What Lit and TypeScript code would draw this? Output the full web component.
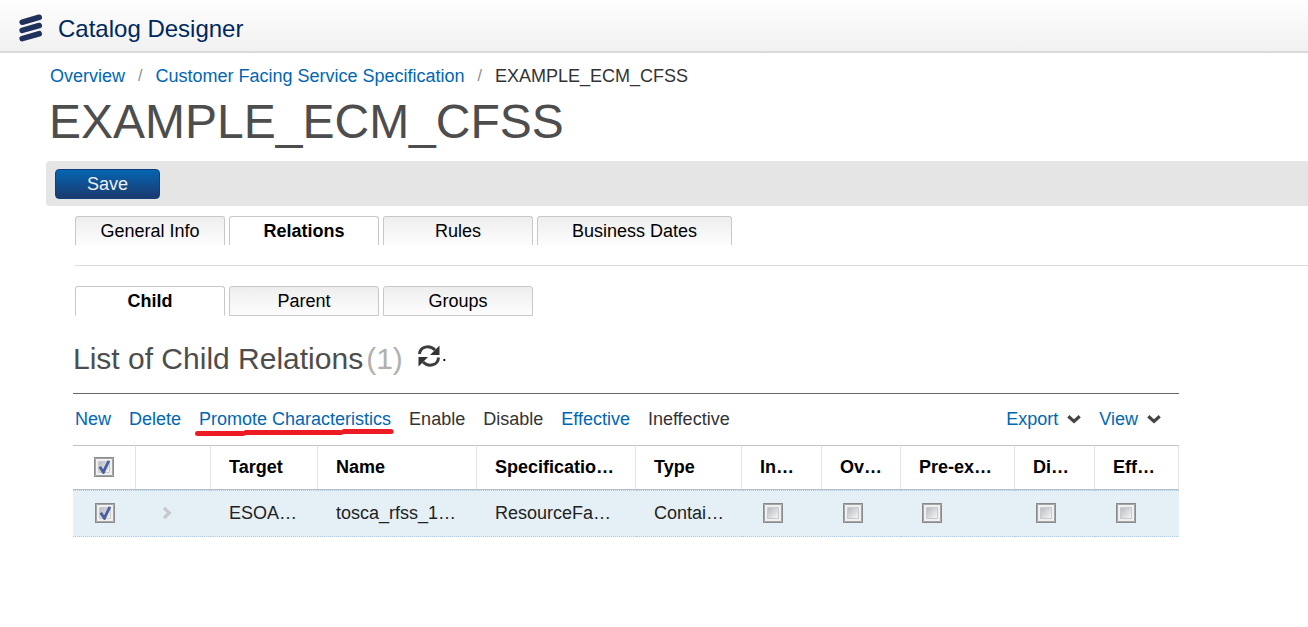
import { LitElement, html, css, svg } from "lit";
import { customElement, property, state } from "lit/decorators.js";
import { classMap } from "lit/directives/class-map.js";

const chevronDown = svg`<path d="M1.300 2.200 L7 7.400 L12.700 2.200" fill="none" stroke="#444" stroke-width="3.200"/>`;

@customElement("tab-strip")
class TabStrip extends LitElement {
  @property({ attribute: false }) tabs: string[] = [];
  @property() active = "";
  @property({ type: Boolean }) closed = false;

  static styles = css`
    :host {
      display: block;
    }
    .tabs {
      display: flex;
      flex-wrap: wrap;
      gap: 4px;
    }
    .tab {
      box-sizing: border-box;
      min-width: 150px;
      height: 29px;
      margin: 0;
      padding: 0 34px;
      border: 1px solid #c8c8c8;
      border-bottom-width: 0;
      border-radius: 3px 3px 0 0;
      background: linear-gradient(#eeeeee, #fdfdfd);
      color: #000;
      font: 18px/26px "Liberation Sans", Arial, sans-serif;
      cursor: pointer;
    }
    .tab.slim {
      padding: 0 8px;
    }
    .closed .tab {
      height: 30px;
      border-bottom: 1px solid #c8c8c8;
    }
    .tabs .tab.active {
      border-bottom-color: #fff;
      background: #fff;
      font-weight: bold;
    }
  `;

  render() {
    return html`<div class=${classMap({ tabs: true, closed: this.closed })} role="tablist">
      ${this.tabs.map(
        (t) => html`<button
          role="tab"
          aria-selected=${t === this.active ? "true" : "false"}
          class=${classMap({ tab: true, active: t === this.active, slim: t.length < 13 })}
          @click=${() => (this.active = t)}
        >${t}</button>`
      )}
    </div>`;
  }
}

interface Column {
  title: string;
  width: number;
  value?: string;
}

const COLUMNS: Column[] = [
  { title: "Target", width: 107, value: "ESOA…" },
  { title: "Name", width: 159, value: "tosca_rfss_1…" },
  { title: "Specificatio…", width: 159, value: "ResourceFa…" },
  { title: "Type", width: 106, value: "Contai…" },
  { title: "In…", width: 80 },
  { title: "Ov…", width: 79 },
  { title: "Pre-ex…", width: 114 },
  { title: "Di…", width: 80 },
  { title: "Eff…", width: 84 },
];

@customElement("relations-table")
class RelationsTable extends LitElement {
  @state() private selected = true;

  static styles = css`
    :host {
      display: block;
    }
    table {
      width: 100%;
      table-layout: fixed;
      border-collapse: separate;
      border-spacing: 0;
      font: 18px/24px "Liberation Sans", Arial, sans-serif;
      color: #222;
    }
    th,
    td {
      box-sizing: border-box;
      padding: 0 0 2px 18px;
      text-align: left;
      white-space: nowrap;
      overflow: hidden;
    }
    th {
      height: 45px;
      border-top: 1px solid #c4c4c4;
      border-bottom: 1px solid #b4bcc6;
      border-right: 1px solid #e2e2e2;
      color: #000;
    }
    td {
      height: 47px;
      border-top: 1px dotted #b0cce8;
      border-bottom: 1px dotted #b0cce8;
      background: #e5f0f6;
    }
    .pick {
      padding: 0 0 2px;
      text-align: center;
    }
    .flag {
      padding-left: 21px;
    }
    .expand {
      display: block;
      margin: 0 0 0 24px;
      padding: 0;
      border: 0;
      background: none;
      line-height: 0;
      cursor: pointer;
    }
    input {
      appearance: none;
      box-sizing: border-box;
      display: inline-block;
      vertical-align: middle;
      width: 20px;
      height: 20px;
      margin: 0 0 2px;
      border: 1px solid #8a8c8c;
      background: url("data:image/svg+xml,%3Csvg xmlns='http://www.w3.org/2000/svg' viewBox='0 0 18 18'%3E%3ClinearGradient id='g' x2='1' y2='1'%3E%3Cstop stop-color='%23b4b9c0'/%3E%3Cstop offset='1' stop-color='%23f8f8f8'/%3E%3C/linearGradient%3E%3Cpath fill='%23f0f0f0' stroke='%23a4a6a6' d='M.5.5h17v17H.5z'/%3E%3Cpath fill='url(%23g)' stroke='%23c8cacc' d='M3.500 3.500h11v11h-11z'/%3E%3C/svg%3E");
    }
    input:checked {
      background: url("data:image/svg+xml,%3Csvg xmlns='http://www.w3.org/2000/svg' viewBox='0 0 18 18'%3E%3ClinearGradient id='g' x2='1' y2='1'%3E%3Cstop stop-color='%23b4b9c0'/%3E%3Cstop offset='1' stop-color='%23f8f8f8'/%3E%3C/linearGradient%3E%3Cpath fill='%23f0f0f0' stroke='%23a4a6a6' d='M.5.5h17v17H.5z'/%3E%3Cpath fill='url(%23g)' stroke='%23c8cacc' d='M3.500 3.500h11v11h-11z'/%3E%3Cpath fill='%234a5f9f' d='M3.500 9.500l2.600-1.500 2 3.200 4.400-8.700 2.700.6-6 13H7.800z'/%3E%3C/svg%3E");
    }
  `;

  private toggle() {
    this.selected = !this.selected;
  }

  render() {
    return html`<table>
      <colgroup>
        <col width="63" />
        <col width="75" />
        ${COLUMNS.map((c) => html`<col width=${c.width} />`)}
      </colgroup>
      <thead>
        <tr>
          <th class="pick">
            <input type="checkbox" aria-label="Select all" .checked=${this.selected} @change=${this.toggle} />
          </th>
          <th></th>
          ${COLUMNS.map((c) => html`<th scope="col">${c.title}</th>`)}
        </tr>
      </thead>
      <tbody>
        <tr>
          <td class="pick">
            <input type="checkbox" aria-label="Select row" .checked=${this.selected} @change=${this.toggle} />
          </td>
          <td class="pick">
            <button class="expand" aria-label="Expand row">
              <svg width="12" height="14" viewBox="0 0 12 14">
                <path d="M4 1.800 L9.300 7 L4 12.200" fill="none" stroke="#c6c8c9" stroke-width="3.200" />
              </svg>
            </button>
          </td>
          ${COLUMNS.map((c) =>
            c.value
              ? html`<td>${c.value}</td>`
              : html`<td class="flag"><input type="checkbox" aria-label=${c.title} /></td>`
          )}
        </tr>
      </tbody>
    </table>`;
  }
}

@customElement("app-root")
class AppRoot extends LitElement {
  static styles = css`
    :host {
      display: block;
      min-height: 100vh;
      background: #fff;
      color: #333;
      font: 18px/24px "Liberation Sans", Arial, sans-serif;
    }
    .topbar {
      display: flex;
      align-items: center;
      gap: 14px;
      box-sizing: border-box;
      height: 53px;
      padding: 6px 18px 0;
      border-bottom: 2px solid #dadada;
      background: linear-gradient(#fefefe, #f1f1f1);
    }
    .product {
      color: #00285f;
      font-size: 24px;
      line-height: 28px;
    }
    .logo {
      display: block;
    }
    a {
      color: #0066b3;
      text-decoration: none;
    }
    .crumbs {
      display: flex;
      align-items: center;
      gap: 13px;
      padding: 11px 50px 0;
    }
    .slash {
      color: #8c8c8c;
      font-size: 16px;
    }
    h1 {
      margin: 10px 0 0;
      padding: 0 49px;
      color: #4d4d4d;
      font-size: 48px;
      font-weight: normal;
      line-height: 48px;
    }
    .actions {
      margin: 15px 0 0 46px;
      padding: 8px 9px 7px;
      border-radius: 4px 0 0 4px;
      background: #e5e5e5;
    }
    .save {
      display: block;
      width: 105px;
      height: 30px;
      padding: 0;
      border: 1px solid #123f77;
      border-radius: 4px;
      background: linear-gradient(#0465b1, #1b3a70);
      color: #f0f0f0;
      font: inherit;
      cursor: pointer;
    }
    .main {
      padding: 10px 0 0 75px;
    }
    .divider {
      margin: 20px 0;
      border: 0;
      border-top: 1px solid #dcdcdc;
    }
    .list {
      margin: 0 129px 0 73px;
      padding-top: 25px;
    }
    .heading {
      display: flex;
      align-items: center;
      height: 36px;
    }
    h2 {
      margin: 0;
      color: #4d4d4d;
      font-size: 30px;
      font-weight: normal;
      line-height: 36px;
    }
    .count {
      margin-left: 3px;
      color: #b0b0b0;
    }
    .refresh {
      margin: 0 1px 6px 14px;
      padding: 0;
      border: 0;
      background: none;
      line-height: 0;
      cursor: pointer;
    }
    .dot {
      padding-bottom: 8px;
      color: #000;
      font-size: 18px;
    }
    .toolbar {
      box-sizing: border-box;
      display: flex;
      justify-content: space-between;
      align-items: center;
      margin-top: 16px;
      height: 52px;
      padding: 0 18px 2px 2px;
      border-top: 1px solid #666;
    }
    .group {
      display: flex;
      gap: 18px;
    }
    .command {
      display: flex;
      align-items: center;
      gap: 9px;
      position: relative;
      margin: 0;
      padding: 0;
      border: 0;
      background: none;
      color: #0066b3;
      font: inherit;
      white-space: nowrap;
      cursor: pointer;
    }
    .plain {
      color: #333;
    }
    .marker {
      position: absolute;
      left: -4px;
      top: 21px;
    }
  `;

  render() {
    return html`
      <header class="topbar">
        <svg class="logo" width="26" height="29" viewBox="0 0 26 29" aria-hidden="true">
          <g stroke="#20315c" stroke-width="5.600" stroke-linecap="round">
            <path d="M4.200 8.200 L21.200 3.300" />
            <path d="M4.200 16.400 L21.200 11.500" />
            <path d="M4.200 24.600 L21.200 19.700" />
          </g>
        </svg>
        <span class="product">Catalog Designer</span>
      </header>
      <nav class="crumbs" aria-label="Breadcrumb">
        <a href="#overview">Overview</a>
        <span class="slash">/</span>
        <a href="#cfss">Customer Facing Service Specification</a>
        <span class="slash">/</span>
        <span>EXAMPLE_ECM_CFSS</span>
      </nav>
      <h1>EXAMPLE_ECM_CFSS</h1>
      <div class="actions"><button class="save">Save</button></div>
      <div class="main">
        <tab-strip .tabs=${["General Info", "Relations", "Rules", "Business Dates"]} active="Relations"></tab-strip>
        <hr class="divider" />
        <tab-strip closed .tabs=${["Child", "Parent", "Groups"]} active="Child"></tab-strip>
      </div>
      <section class="list">
        <div class="heading">
          <h2>List of Child Relations<span class="count">(1)</span></h2>
          <button class="refresh" aria-label="Refresh">
            <svg width="24" height="22" viewBox="0 0 24 22">
              <g fill="none" stroke="#3d3d3d" stroke-width="3">
                <path d="M2.500 9 C3 1.500 12.500 -0.500 18 5" />
                <path d="M21.500 12.500 C21 20.500 11.500 22.500 6 17" />
              </g>
              <path d="M22.500 0.500 V10 H13 Z M1.500 21.500 V12 H11 Z" fill="#333" />
            </svg>
          </button>
          <span class="dot">.</span>
        </div>
        <div class="toolbar">
          <div class="group">
            <button class="command">New</button>
            <button class="command">Delete</button>
            <button class="command">
              Promote Characteristics
              <svg class="marker" width="200" height="8" viewBox="0 0 200 8" aria-hidden="true">
                <path
                  d="M2.500 5.500 H48 M51 4.500 H146 M149 3.500 H196"
                  fill="none"
                  stroke="#ed1c24"
                  stroke-width="5"
                  stroke-linecap="round"
                />
              </svg>
            </button>
            <button class="command plain">Enable</button>
            <button class="command plain">Disable</button>
            <button class="command">Effective</button>
            <button class="command plain">Ineffective</button>
          </div>
          <div class="group">
            <button class="command" aria-haspopup="menu">
              Export <svg width="14" height="10" viewBox="0 0 14 10">${chevronDown}</svg>
            </button>
            <button class="command" aria-haspopup="menu">
              View <svg width="14" height="10" viewBox="0 0 14 10">${chevronDown}</svg>
            </button>
          </div>
        </div>
        <relations-table></relations-table>
      </section>
    `;
  }
}
